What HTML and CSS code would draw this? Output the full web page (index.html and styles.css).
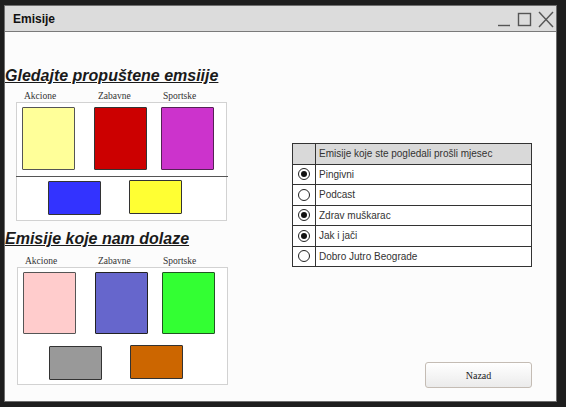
FILE: index.html
```
<!DOCTYPE html>
<html>
<head>
<meta charset="utf-8">
<link rel="stylesheet" href="styles.css">
</head>
<body>
<div class="window">
  <div class="titlebar">
    <span class="title">Emisije</span>
    <svg class="controls" width="60" height="18" viewBox="0 0 60 18">
      <line x1="2" y1="15.5" x2="14" y2="15.5" stroke="#555" stroke-width="1.4"/>
      <rect x="22.5" y="3.5" width="12" height="12" fill="none" stroke="#555" stroke-width="1.4"/>
      <line x1="43" y1="2" x2="57" y2="17" stroke="#555" stroke-width="1.4"/>
      <line x1="57" y1="2" x2="43" y2="17" stroke="#555" stroke-width="1.4"/>
    </svg>
  </div>
  <div class="content">
    <div class="left">
      <h2 class="heading h1">Gledajte propuštene emsiije</h2>
      <div class="labels l1">
        <span class="lab la">Akcione</span><span class="lab lb">Zabavne</span><span class="lab lc">Sportske</span>
      </div>
      <div class="panel p1">
        <div class="row top">
          <div class="sq tall yellow"></div>
          <div class="sq tall red g1"></div>
          <div class="sq tall magenta g2"></div>
        </div>
        <div class="divider"></div>
        <div class="row bottom brow1">
          <div class="sq short blue"></div>
          <div class="sq short yellow2 g3"></div>
        </div>
      </div>
      <h2 class="heading h2">Emisije koje nam dolaze</h2>
      <div class="labels l2">
        <span class="lab la2">Akcione</span><span class="lab lb2">Zabavne</span><span class="lab lc">Sportske</span>
      </div>
      <div class="panel p2">
        <div class="row top">
          <div class="sq tall2 pink"></div>
          <div class="sq tall2 violet g1"></div>
          <div class="sq tall2 green g2"></div>
        </div>
        <div class="row bottom brow2">
          <div class="sq short grey"></div>
          <div class="sq short orange g3"></div>
        </div>
      </div>
    </div>
    <div class="right">
      <div class="grid">
        <div class="cell sel head"></div><div class="cell txt head">Emisije koje ste pogledali prošli mjesec</div>
        <div class="cell sel"><span class="radio on"></span></div><div class="cell txt">Pingivni</div>
        <div class="cell sel"><span class="radio"></span></div><div class="cell txt">Podcast</div>
        <div class="cell sel"><span class="radio on"></span></div><div class="cell txt">Zdrav muškarac</div>
        <div class="cell sel"><span class="radio on"></span></div><div class="cell txt">Jak i jači</div>
        <div class="cell sel"><span class="radio"></span></div><div class="cell txt">Dobro Jutro Beograde</div>
      </div>
      <button class="btn">Nazad</button>
    </div>
  </div>
</div>
</body>
</html>
```
FILE: styles.css
```
html, body {
  margin: 0;
  padding: 0;
  background: #1e1e1e;
}
.window {
  box-sizing: border-box;
  margin: 5px 0 0 4px;
  width: 553px;
  height: 397px;
  border: 1px solid #6e6e6e;
  display: flex;
  flex-direction: column;
  background: #fcfcfc;
}
.titlebar {
  height: 25px;
  background: #dcdcdc;
  border-bottom: 1px solid #7a7a7a;
  display: flex;
  align-items: center;
  justify-content: space-between;
  padding-left: 8px;
}
.title {
  font-family: "Liberation Sans", Arial, sans-serif;
  font-weight: bold;
  font-size: 12px;
  color: #111;
  margin-top: 1px;
}
.controls {
  display: block;
  margin-top: 1px;
}
.content {
  flex: 1;
  display: flex;
  background: #fcfcfc;
}
.left {
  width: 287px;
  display: flex;
  flex-direction: column;
}
.heading {
  margin: 0;
  font-family: "Liberation Sans", Arial, sans-serif;
  font-weight: bold;
  font-style: italic;
  text-decoration: underline;
  font-size: 16px;
  line-height: 18px;
  color: #1a1a1a;
}
.h1 { margin-top: 35px; }
.h2 { margin-top: 9px; }
.labels {
  display: flex;
  align-items: flex-end;
  font-family: "Liberation Serif", "Times New Roman", serif;
  font-size: 9.5px;
  line-height: 11px;
  color: #333;
}
.l1 { height: 17px; }
.l2 { height: 19px; }
.lab { display: block; }
.la { margin-left: 19px; width: 74px; }
.lb { width: 65px; }
.la2 { margin-left: 20px; width: 73px; }
.lb2 { width: 65px; }
.panel {
  box-sizing: border-box;
  width: 211px;
  border: 1px solid #d2d2d2;
  background: #fff;
}
.p1 { margin-left: 11px; height: 119px; }
.p2 { margin-left: 12px; height: 118px; }
.row { display: flex; }
.top { padding-left: 5px; padding-top: 4px; }
.sq {
  box-sizing: border-box;
  flex: none;
  width: 53px;
  border: 1px solid #333;
  border-radius: 1px;
}
.tall { height: 63px; }
.tall2 { height: 62px; }
.short { height: 34px; }
.g1 { margin-left: 19px; }
.g2 { margin-left: 14px; }
.g3 { margin-left: 28px; }
.divider {
  height: 1px;
  background: #555;
  margin-top: 6px;
  margin-left: -1px;
  width: 212px;
}
.brow1 { padding-left: 31px; padding-top: 4px; align-items: flex-start; }
.brow1 .g3 { margin-top: -1px; }
.brow2 { padding-left: 31px; padding-top: 12px; align-items: flex-start; }
.brow2 .g3 { margin-top: -1px; }
.yellow { background: #ffff99; border-color: #555; }
.red { background: #cc0000; }
.magenta { background: #cc33cc; border-color: #552255; }
.blue { background: #3333ff; }
.yellow2 { background: #ffff33; }
.pink { background: #ffcccc; border-color: #555; }
.violet { background: #6666cc; border-color: #222; }
.green { background: #33ff33; border-color: #225522; }
.grey { background: #999999; }
.orange { background: #cc6600; }
.right {
  width: 240px;
  display: flex;
  flex-direction: column;
}
.grid {
  margin-top: 111px;
  display: grid;
  grid-template-columns: 23px 1fr;
  grid-auto-rows: 20.5px;
  border: 1px solid #333;
  border-bottom: none;
  background: #fff;
}
.cell {
  border-bottom: 1px solid #333;
  display: flex;
  align-items: center;
}
.sel {
  border-right: 1px solid #333;
  justify-content: center;
}
.head { background: #d9d9d9; }
.txt {
  font-family: "Liberation Sans", Arial, sans-serif;
  font-size: 10px;
  color: #333;
  padding-left: 3px;
}
.radio {
  box-sizing: border-box;
  width: 12px;
  height: 12px;
  border: 1px solid #222;
  border-radius: 50%;
  background: #fff;
  display: flex;
  align-items: center;
  justify-content: center;
}
.radio.on::after {
  content: "";
  width: 6px;
  height: 6px;
  border-radius: 50%;
  background: #111;
}
.btn {
  margin-top: auto;
  margin-bottom: 13px;
  align-self: flex-end;
  width: 107px;
  height: 26px;
  border: 1px solid #c4bcb4;
  border-radius: 3px;
  background: linear-gradient(#ffffff, #ebebeb);
  font-family: "Liberation Serif", "Times New Roman", serif;
  font-size: 10px;
  color: #222;
  padding: 0;
}
```
